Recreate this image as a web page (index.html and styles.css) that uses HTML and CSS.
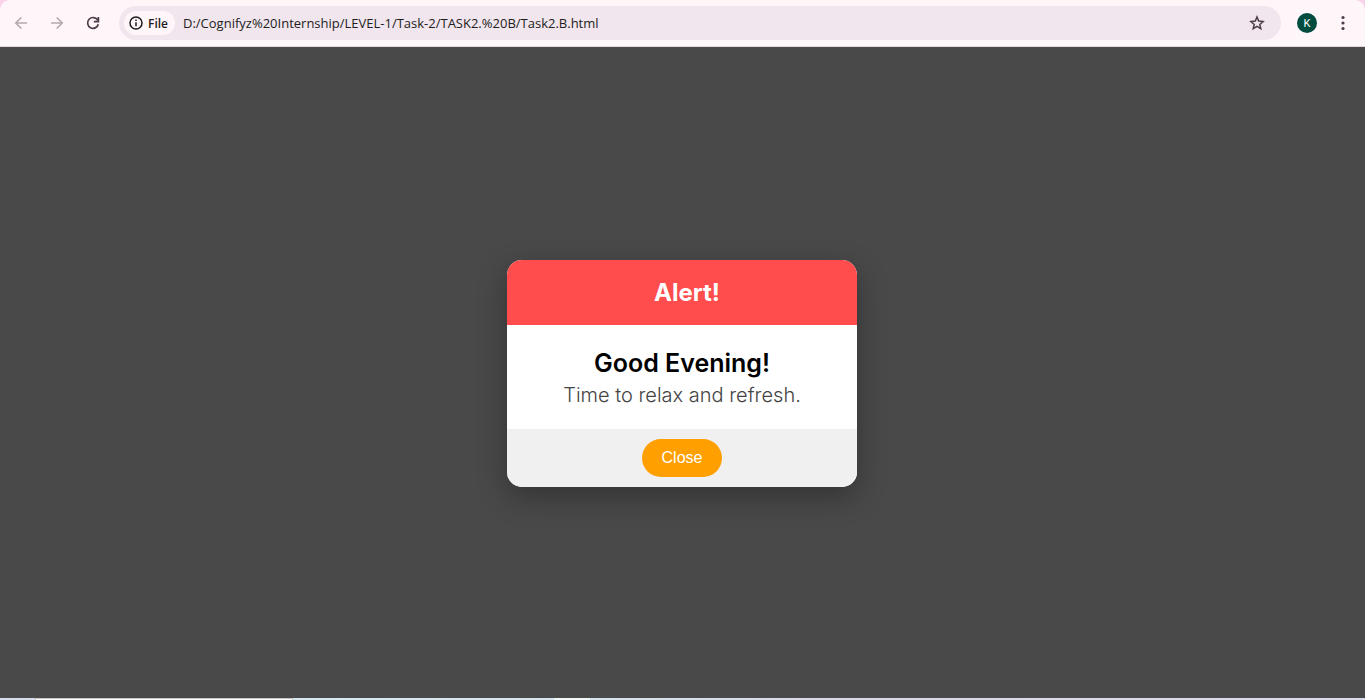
FILE: index.html
```html
<!DOCTYPE html>
<html lang="en">
<head>
<meta charset="utf-8">
<title>Alert</title>
<link rel="stylesheet" href="styles.css">
</head>
<body>
<div class="frame">
<header class="toolbar">
  <nav class="nav">
    <button class="icon-btn muted" aria-label="Back" disabled><svg width="16" height="16" viewBox="0 0 16 16"><path d="M14 8H3M8.3 2.5 2.8 8l5.5 5.5"/></svg></button>
    <button class="icon-btn muted" aria-label="Forward" disabled><svg width="16" height="16" viewBox="0 0 16 16"><path d="M2 8h11M7.7 2.5 13.2 8l-5.5 5.5"/></svg></button>
    <button class="icon-btn" aria-label="Reload"><svg width="16" height="16" viewBox="0 0 16 16"><path d="M12.6 5A5.4 5.4 0 1 0 13.3 9.2M13.4 2v4.6H8.8"/></svg></button>
  </nav>
  <div class="address">
    <button class="chip"><svg width="14" height="14" viewBox="0 0 14 14"><circle cx="7" cy="7" r="6"/><path d="M7 6.2v4M7 3.6v1.4"/></svg>File</button>
    <input class="url" type="text" aria-label="Address" value="D:/Cognifyz%20Internship/LEVEL-1/Task-2/TASK2.%20B/Task2.B.html">
    <button class="icon-btn star" aria-label="Bookmark"><svg width="16" height="16" viewBox="0 0 16 16"><path d="m8 2 1.7 4.1 4.4.4-3.3 2.9 1 4.3L8 11.4l-3.8 2.3 1-4.3-3.3-2.9 4.4-.4z"/></svg></button>
  </div>
  <button class="avatar" aria-label="Profile">K</button>
  <button class="icon-btn menu" aria-label="Menu"><svg width="12" height="16" viewBox="2 0 12 16"><circle cx="8" cy="2.5" r="1.6"/><circle cx="8" cy="8" r="1.6"/><circle cx="8" cy="13.5" r="1.6"/></svg></button>
</header>
<main class="page">
  <section class="modal" role="dialog" aria-labelledby="modal-title">
    <h1 class="modal-header" id="modal-title">Alert!</h1>
    <div class="modal-body">
      <h2 class="greeting">Good Evening!</h2>
      <p class="message">Time to relax and refresh.</p>
    </div>
    <footer class="modal-footer"><button class="close">Close</button></footer>
  </section>
</main>
<div class="taskbar"><span class="search"></span><span class="active"></span></div>
</div>
</body>
</html>
```
FILE: styles.css
```css
* { box-sizing: border-box; }
body { margin: 0; background: #f8d3ea; }
button, input { border: 0; padding: 0; background: none; color: inherit; }
svg { display: block; fill: none; stroke: currentColor; stroke-width: 1.7; }

.frame { min-height: 100vh; display: flex; flex-direction: column; }

.toolbar {
  height: 47px;
  display: flex;
  align-items: center;
  padding: 0 16px 0 13px;
  background: #fff6fa;
  border-bottom: 1px solid #e4d9e0;
  border-radius: 10px 10px 0 0;
  color: #4d3c4a;
}
.nav { display: flex; gap: 20px; margin-right: 18px; }
.icon-btn { display: block; width: 16px; height: 16px; }
.muted { color: #b3abb0; }
.address {
  flex: 1;
  height: 34px;
  display: flex;
  align-items: center;
  padding: 0 16px 0 5px;
  background: #f1e5ee;
  border-radius: 17px;
}
.chip {
  height: 24px;
  display: flex;
  align-items: center;
  gap: 5px;
  padding: 0 7px 0 5px;
  border-radius: 12px;
  background: #fff6fa;
  color: #1f1b1e;
  font: 600 12px "Open Sans", sans-serif;
}
.chip svg { stroke-width: 1.5; }
.url {
  flex: 1;
  min-width: 0;
  margin-left: 8px;
  color: #221d21;
  font: 13px "Open Sans", sans-serif;
  outline: 0;
}
.star svg { stroke-width: 1.5; }
.avatar {
  width: 20px;
  height: 20px;
  margin: 0 20px 0 16px;
  border-radius: 50%;
  background: #004d40;
  color: #fff;
  font: 11px Roboto, sans-serif;
}
.menu { width: 12px; }
.menu svg { fill: currentColor; stroke: none; }

.page {
  flex: 1;
  display: flex;
  align-items: center;
  justify-content: center;
  padding: 1px 1px 0 0;
  background: #494949;
  font-family: Inter, sans-serif;
}
.modal {
  width: 350px;
  overflow: hidden;
  border-radius: 15px;
  background: #fff;
  box-shadow: 0 10px 30px rgba(0, 0, 0, .3);
  text-align: center;
}
.modal-header {
  margin: 0;
  padding: 15px 10px 15px 20px;
  background: #ff4d4d;
  color: #fff;
  font-size: 24px;
  font-weight: 700;
  line-height: 35px;
}
.modal-body { padding: 20px; }
.greeting { margin: 0; color: #000; font-size: 25px; font-weight: 600; line-height: 36px; }
.message { margin: 0; color: #444; font-size: 20px; font-weight: 300; line-height: 28px; }
.modal-footer { padding: 10px; background: #f0f0f0; }
.close {
  padding: 10px 20px;
  border-radius: 19px;
  background: #ffa000;
  color: #fff;
  font: 16px/18px "Liberation Sans", Arial, sans-serif;
}

.taskbar {
  display: flex;
  height: 2px;
  padding-left: 35px;
  background: linear-gradient(90deg, #d5dbec, #d5e8ef 25%, #d6e0ea 50%, #d8d9e7 60%, #d9dbec);
}
.search { width: 258px; background: #fff; border: 1px solid #c5c5c5; border-bottom: 0; }
.active { width: 36px; margin-left: 261px; background: #f2f7fa; }
```
